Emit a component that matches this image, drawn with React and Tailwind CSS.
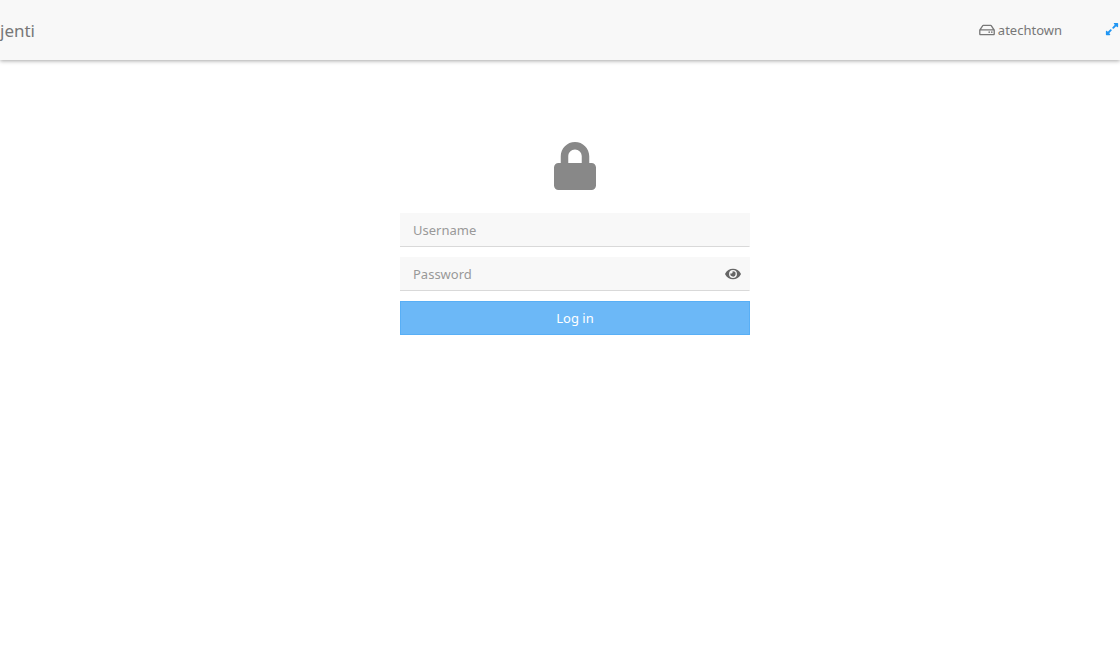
import { useState } from 'react'
import { FaEye, FaEyeSlash, FaExpandAlt, FaLock, FaRegHdd } from 'react-icons/fa'

const inputClass =
  'block h-[34px] w-full border-r border-b border-r-transparent border-b-[#d9d9d9] bg-[#f8f8f8] pt-px pl-[13px] text-[13px] text-[#555] outline-none placeholder:text-[#999]'

function Header({ hostname }) {
  const toggleFullscreen = () => {
    if (document.fullscreenElement) {
      document.exitFullscreen()
    } else {
      document.documentElement.requestFullscreen()
    }
  }

  return (
    <header className="flex h-[60px] items-center justify-between bg-[#f8f8f8] pr-px text-[#777] shadow-[0_1px_4px_rgba(0,0,0,0.35)]">
      <a href="#" className="pt-0.5 text-[17px]">jenti</a>
      <div className="flex items-center gap-[43px]">
        <a href="#" className="flex items-center gap-[3px] text-[13px]">
          <FaRegHdd className="h-3.5 w-4" />
          <span className="pt-0.5">{hostname}</span>
        </a>
        <button
          type="button"
          aria-label="Toggle fullscreen"
          onClick={toggleFullscreen}
          className="pb-0.5 text-[#2196f3]"
        >
          <FaExpandAlt className="size-3.5" />
        </button>
      </div>
    </header>
  )
}

function LoginForm() {
  const [username, setUsername] = useState('')
  const [password, setPassword] = useState('')
  const [showPassword, setShowPassword] = useState(false)

  return (
    <form className="flex w-full max-w-[350px] flex-col gap-2.5" onSubmit={e => e.preventDefault()}>
      <FaLock className="mx-auto mb-[13px] h-12 w-[42px] text-[#888]" />

      <input
        type="text"
        aria-label="Username"
        placeholder="Username"
        value={username}
        onChange={e => setUsername(e.target.value)}
        className={inputClass}
      />

      <div className="relative">
        <input
          type={showPassword ? 'text' : 'password'}
          aria-label="Password"
          placeholder="Password"
          value={password}
          onChange={e => setPassword(e.target.value)}
          className={inputClass}
        />
        <button
          type="button"
          aria-label="Show password"
          onClick={() => setShowPassword(!showPassword)}
          className="absolute inset-y-0 right-[9px] flex items-center text-[#666]"
        >
          {showPassword ? <FaEyeSlash className="h-3.5 w-4" /> : <FaEye className="h-3.5 w-4" />}
        </button>
      </div>

      <button
        type="submit"
        className="h-[34px] border border-[#58aff6] bg-[#6cb8f7] pt-0.5 text-[13px] text-white"
      >
        Log in
      </button>
    </form>
  )
}

export default function App() {
  return (
    <div className="min-h-screen overflow-hidden bg-white font-['Noto_Sans',sans-serif]">
      <Header hostname="atechtown" />
      <main className="flex justify-center pt-[82px] pl-[30px]">
        <LoginForm />
      </main>
    </div>
  )
}
